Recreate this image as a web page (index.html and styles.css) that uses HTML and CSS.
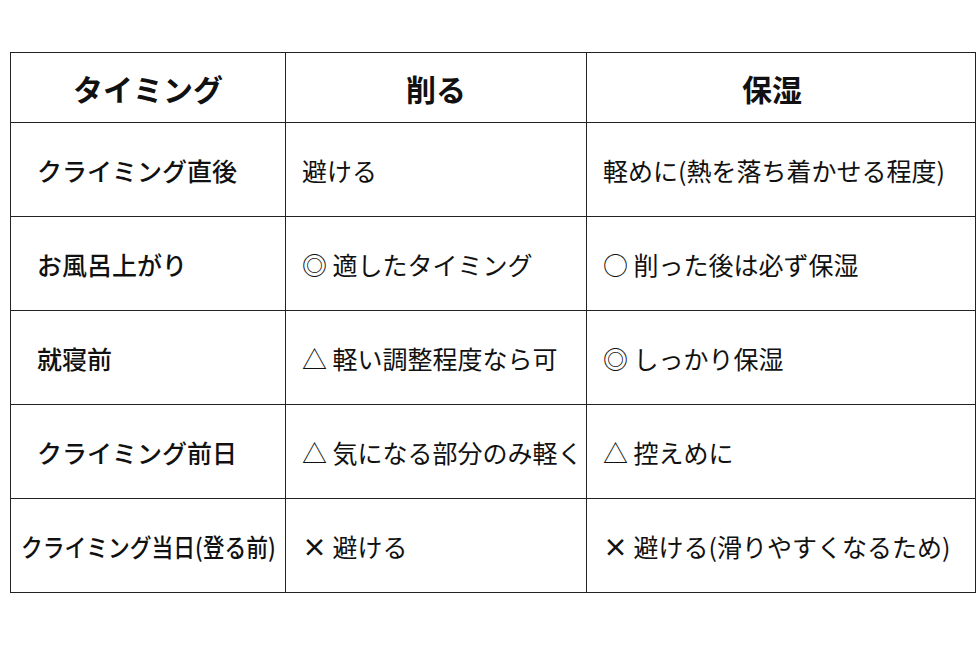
FILE: index.html
```html
<!DOCTYPE html>
<html lang="ja">
<head>
<meta charset="utf-8">
<link rel="stylesheet" href="styles.css">
</head>
<body>
<div class="wrap">
<table class="grid">
<colgroup><col class="c1"><col class="c2"><col class="c3"></colgroup>
<thead>
<tr><th>タイミング</th><th>削る</th><th class="h3">保湿</th></tr>
</thead>
<tbody>
<tr><td class="label">クライミング直後</td><td>避ける</td><td>軽めに(熱を落ち着かせる程度)</td></tr>
<tr><td class="label">お風呂上がり</td><td>◎ 適したタイミング</td><td>○ 削った後は必ず保湿</td></tr>
<tr><td class="label">就寝前</td><td>△ 軽い調整程度なら可</td><td>◎ しっかり保湿</td></tr>
<tr><td class="label">クライミング前日</td><td>△ 気になる部分のみ軽く</td><td>△ 控えめに</td></tr>
<tr><td class="label tight"><span class="squeeze">クライミング当日(登る前)</span></td><td><span class="xmark">×</span> 避ける</td><td><span class="xmark">×</span> 避ける(滑りやすくなるため)</td></tr>
</tbody>
</table>
</div>
</body>
</html>
```
FILE: styles.css
```css
html, body {
  margin: 0;
  padding: 0;
  background: #ffffff;
}
body {
  font-family: "Noto Sans CJK JP", "Noto Sans", sans-serif;
  color: #111;
}
.wrap {
  padding: 52px 5px 0 10px;
}
.grid {
  border-collapse: collapse;
  table-layout: fixed;
  width: 965px;
}
.c1 { width: 275px; }
.c2 { width: 301px; }
.c3 { width: 389px; }
.grid th, .grid td {
  border: 1px solid #222;
  padding: 0 0 0 16px;
  line-height: 1.2;
  white-space: nowrap;
  overflow: hidden;
}
.grid th {
  height: 69px;
  font-size: 30px;
  font-weight: 700;
  text-align: center;
  padding: 0;
}
.grid th.h3 {
  padding-right: 18px;
}
.grid td {
  height: 93px;
  font-size: 25px;
  font-weight: 400;
  text-align: left;
}
.grid td.label {
  font-weight: 500;
  padding-left: 26px;
}
.grid td.tight {
  padding: 0;
  text-align: center;
}
.squeeze {
  display: inline-block;
  margin: 0 -24px;
  transform: scaleX(0.87);
  transform-origin: center;
}
.xmark {
  font-weight: 700;
  font-size: 25px;
}
```
